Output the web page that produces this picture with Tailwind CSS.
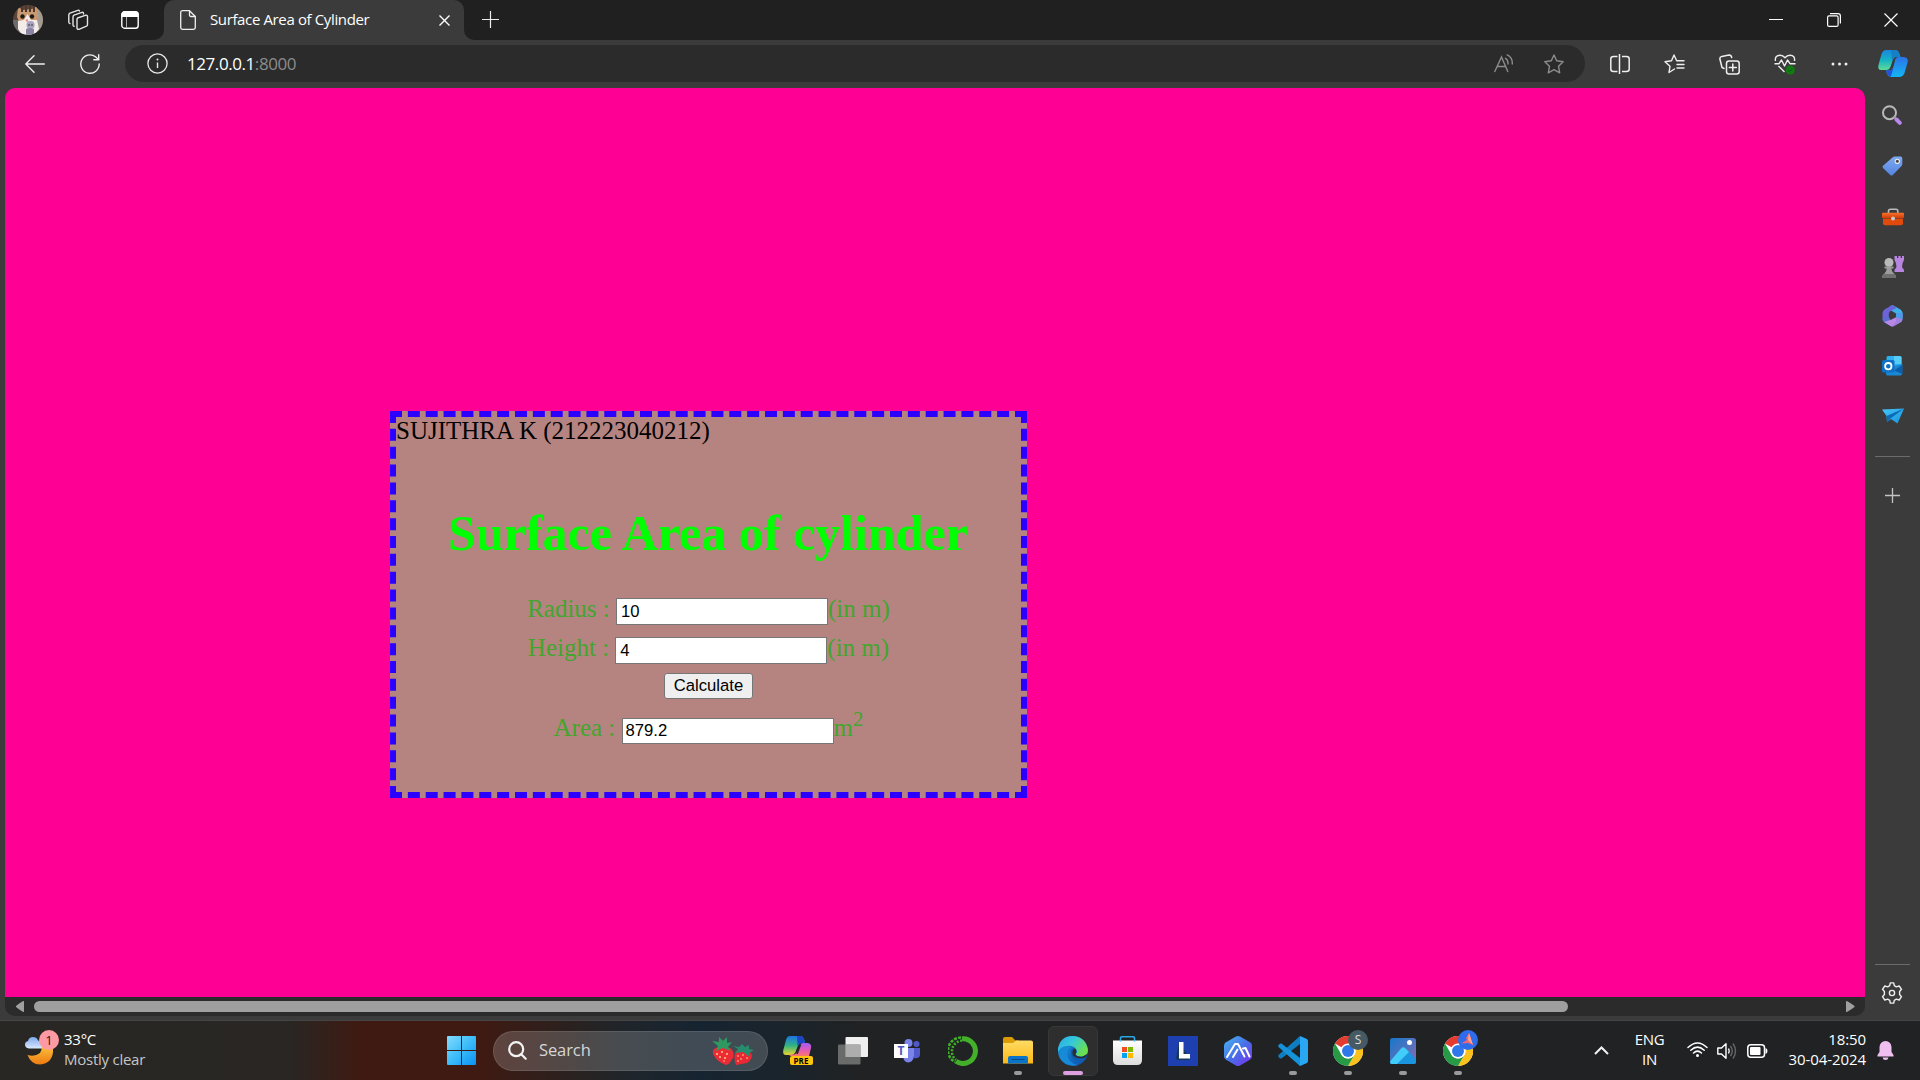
<!DOCTYPE html>
<html lang="en">
<head>
<meta charset="utf-8">
<title>Surface Area of Cylinder</title>
<script src="https://cdn.jsdelivr.net/npm/@tailwindcss/browser@4"></script>
</head>
<body class="w-[1920px] h-[1080px] overflow-hidden flex flex-col bg-[#3b3b3b] font-['Open_Sans','Noto_Sans',sans-serif] text-white">
<svg width="0" height="0" class="absolute">
  <defs>
    <linearGradient id="win" x1="0" y1="0" x2="1" y2="1"><stop offset="0" stop-color="#84dcff"/><stop offset=".5" stop-color="#3cbcf8"/><stop offset="1" stop-color="#0a92f5"/></linearGradient>
    <linearGradient id="cpA" x1="0" y1="0" x2="0" y2="1"><stop offset="0" stop-color="#1b86e0"/><stop offset=".5" stop-color="#16b2c4"/><stop offset="1" stop-color="#5fdc98"/></linearGradient>
    <linearGradient id="cpB" x1="0" y1="0" x2="0" y2="1"><stop offset="0" stop-color="#2b73e8"/><stop offset="1" stop-color="#14b6f4"/></linearGradient>
    <linearGradient id="cpC" x1="0" y1="0" x2="0" y2="1"><stop offset="0" stop-color="#1d74e4"/><stop offset=".5" stop-color="#30b384"/><stop offset="1" stop-color="#e8d52c"/></linearGradient>
    <linearGradient id="cpD" x1="0" y1="0" x2="0" y2="1"><stop offset="0" stop-color="#a45cf4"/><stop offset=".6" stop-color="#e95bb0"/><stop offset="1" stop-color="#f87a6a"/></linearGradient>
    <linearGradient id="edgeTop" x1="0" y1="0" x2="1" y2=".5"><stop offset="0" stop-color="#29a9e8"/><stop offset=".5" stop-color="#35c8d8"/><stop offset="1" stop-color="#6be04f"/></linearGradient>
    <linearGradient id="edgeLow" x1="0" y1="0" x2="1" y2="1"><stop offset="0" stop-color="#1a9be8"/><stop offset="1" stop-color="#0c4ea5"/></linearGradient>
    <linearGradient id="folder" x1="0" y1="0" x2="0" y2="1"><stop offset="0" stop-color="#ffdc66"/><stop offset="1" stop-color="#fcb813"/></linearGradient>
    <linearGradient id="hex" x1="0" y1="0" x2="1" y2="1"><stop offset="0" stop-color="#48b8f0"/><stop offset=".5" stop-color="#4870e8"/><stop offset="1" stop-color="#7a2cec"/></linearGradient>
    <linearGradient id="photo" x1="0" y1="0" x2="1" y2="1"><stop offset="0" stop-color="#1578cc"/><stop offset="1" stop-color="#8a6cb0"/></linearGradient>
    <linearGradient id="moon" x1="0" y1="0" x2="0" y2="1"><stop offset="0" stop-color="#fbc23c"/><stop offset="1" stop-color="#ee7a12"/></linearGradient>
    <linearGradient id="cloud" x1="0" y1="0" x2="0" y2="1"><stop offset="0" stop-color="#7ba8ee"/><stop offset="1" stop-color="#dbe8fb"/></linearGradient>
    <linearGradient id="bag" x1="0" y1="0" x2="0" y2="1"><stop offset="0" stop-color="#ffffff"/><stop offset="1" stop-color="#dcdcdc"/></linearGradient>
    <linearGradient id="plane" x1="0" y1="0" x2="1" y2="1"><stop offset="0" stop-color="#45c6fa"/><stop offset="1" stop-color="#1592dd"/></linearGradient>
    <linearGradient id="tag" x1="0" y1="0" x2="0" y2="1"><stop offset="0" stop-color="#7faaf0"/><stop offset="1" stop-color="#5484e0"/></linearGradient>
    <linearGradient id="tool" x1="0" y1="0" x2="0" y2="1"><stop offset="0" stop-color="#f8732c"/><stop offset="1" stop-color="#cf3d07"/></linearGradient>
    <clipPath id="avatarClip"><circle cx="15" cy="15" r="15"/></clipPath>
    <symbol id="chrome" viewBox="0 0 30 30">
      <circle cx="15" cy="15" r="15" fill="#fff"/>
      <path d="M15 15 2 7.5A15 15 0 0 1 28 7.5L15 7.5Z" fill="#e33b2e"/>
      <path d="M28 7.5A15 15 0 0 1 15 30L21.5 18.75A7.5 7.5 0 0 0 15 7.5Z" fill="#fcc21b"/>
      <path d="M15 30A15 15 0 0 1 2 7.5L8.5 18.75A7.5 7.5 0 0 0 21.5 18.75Z" fill="#269a45"/>
      <circle cx="15" cy="15" r="7.6" fill="#fff"/><circle cx="15" cy="15" r="6" fill="#2f78ea"/>
    </symbol>
  </defs>
</svg>

<!-- Tab strip -->
<header class="h-10 shrink-0 bg-[#202020] flex items-center">
  <div class="w-[56px] flex justify-center">
    <svg width="30" height="30" viewBox="0 0 30 30"><g clip-path="url(#avatarClip)">
      <rect width="30" height="30" fill="#5b4439"/><path d="M22 0h8v30h-8z" fill="#a39b90"/><path d="M0 15h8v15H0z" fill="#6e6a69"/>
      <path d="M5 2 10 5 19 4 24 1 25 12 22 19H7L4 12Z" fill="#c99a72"/><path d="M12 0h2v7h-2zM16 0h2v7h-2zM8 2h2v5H8zM20 2h2v5h-2z" fill="#4d382e"/>
      <path d="M14.500 9 18 15 24 15 26 24 21 30H9L5 24 5 16 11 15Z" fill="#f3ece8"/>
      <circle cx="9.500" cy="11.500" r="2.200" fill="#221a18"/><circle cx="19" cy="11.500" r="2.200" fill="#221a18"/><circle cx="14" cy="15.500" r="1.200" fill="#e88b86"/>
      <circle cx="17.500" cy="20" r="4" fill="#a7a2bd"/><path d="M13 24q4-2 8 0v6h-8z" fill="#8b84a4"/><circle cx="16" cy="20" r=".8" fill="#333"/><circle cx="19" cy="20" r=".8" fill="#333"/></g></svg>
  </div>
  <div class="w-[43px] flex justify-center">
    <svg width="22" height="22" viewBox="0 0 22 22" fill="none" stroke="#e4e4e4" stroke-width="1.400" stroke-linejoin="round" stroke-linecap="round"><path d="M10.500 9 19 6.200Q20.500 6 20.500 7.500V15.500Q20.500 16.800 19.500 17.200L12 20.300Q10 20.600 10 19V10.500Q10 9.300 10.500 9Z"/><path d="M16.500 5V4.300Q16.300 3 15 3.400L7 6.200Q6 6.700 6 8V16Q6 17.200 7.200 17.200"/><path d="M12.500 2Q12 .900 10.800 1.300L3 4.200Q1.800 4.800 1.800 6V13Q1.800 14.400 3 14.600"/></svg>
  </div>
  <div class="w-[61px] flex justify-center">
    <svg width="18" height="18" viewBox="0 0 18 18"><rect x=".8" y=".8" width="16.400" height="16.400" rx="2.800" fill="none" stroke="#fff" stroke-width="1.400"/><path d="M.500 6V3Q.500.500 3 .500H15Q17.500.500 17.500 3V6Z" fill="#fff"/><path d="M5.500 6v11" stroke="#aaa" stroke-width="1"/></svg>
  </div>
  <div class="w-1"></div>
  <div class="relative w-[300px] h-10 bg-[#3b3b3b] rounded-t-[10px] flex items-center">
    <svg class="absolute -left-[10px] bottom-0" width="10" height="10"><path d="M10 0V10H0A10 10 0 0 0 10 0" fill="#3b3b3b"/></svg>
    <svg class="absolute -right-[10px] bottom-0" width="10" height="10"><path d="M0 0V10H10A10 10 0 0 1 0 0" fill="#3b3b3b"/></svg>
    <svg class="ml-4" width="16" height="20" viewBox="0 0 16 20" fill="none" stroke="#eee" stroke-width="1.300" stroke-linejoin="round"><path d="M9.500.700H2.500Q.700.700.700 2.500V17.500Q.700 19.300 2.500 19.300H13.500Q15.300 19.300 15.300 17.500V6.500Z"/><path d="M9.500.700V5Q9.500 6.500 11 6.500H15.300"/></svg>
    <span class="ml-[14px] mb-0.5 w-[216px] text-[15px] leading-5 tracking-[-0.370px] whitespace-nowrap">Surface Area of Cylinder</span>
    <svg class="ml-[13px] mt-px" width="11" height="11" viewBox="0 0 11 11"><path d="M.500.500 10.500 10.500M10.500.500.500 10.500" stroke="#fff" stroke-width="1.400"/></svg>
  </div>
  <div class="w-[53px] flex justify-center"><svg class="mb-px" width="17" height="17"><path d="M8.500 0V17M0 8.500H17" stroke="#eee" stroke-width="1.200"/></svg></div>
  <div class="ml-auto flex items-center">
    <div class="w-[58px] flex justify-center"><svg width="14" height="14"><path d="M0 6.500H14" stroke="#fff"/></svg></div>
    <div class="w-[57px] flex justify-center"><svg width="14" height="14" fill="none" stroke="#fff" stroke-width="1.200"><rect x=".600" y="2.900" width="10.500" height="10.500" rx="1.500"/><path d="M3 .600H11Q13.400.600 13.400 3V10.500"/></svg></div>
    <div class="w-[58px] flex justify-center"><svg width="14" height="14"><path d="M.500.500 13.500 13.500M13.500.500.500 13.500" stroke="#fff" stroke-width="1.200"/></svg></div>
  </div>
</header>

<!-- Toolbar -->
<nav class="h-12 shrink-0 flex items-center">
  <div class="w-[70px] flex justify-center"><svg class="mb-px" width="20" height="18" fill="none" stroke="#eee" stroke-width="1.400" stroke-linecap="round" stroke-linejoin="round"><path d="M19.300 9H.800M9 .700.800 9 9 17.300"/></svg></div>
  <div class="w-[40px] flex justify-center"><svg width="20" height="20" fill="none" stroke="#eee" stroke-width="1.400" stroke-linecap="round"><path d="M19.200 10A9.200 9.200 0 1 1 15.500 2.700L18.500 5.500M18.700.800V5.700H13.800"/></svg></div>
  <div class="ml-[15px] mb-px w-[1460px] h-[37px] rounded-full bg-[#2b2b2b] flex items-center">
    <svg class="ml-[22px]" width="21" height="21" fill="none"><circle cx="10.500" cy="10.500" r="9.600" stroke="#e8e8e8" stroke-width="1.300"/><path d="M10.500 9.500V15" stroke="#e8e8e8" stroke-width="1.400"/><circle cx="10.500" cy="6.500" r="1" fill="#e8e8e8"/></svg>
    <span class="ml-[19px] text-[17px] leading-5 tracking-[-0.430px]">127.0.0.1<span class="text-[#8c8c8c]">:8000</span></span>
    <svg class="ml-auto" width="20" height="19" fill="none" stroke="#8c8c8c" stroke-width="1.400" stroke-linecap="round"><path d="M.800 17.500 7.500 3 13.800 17.500M3.200 12.500H11.600M11.500 4.300Q14.200 6 14 10M13.200.900Q18.700 3.500 18.300 10"/></svg>
    <svg class="ml-[30px] mr-[21px]" width="20" height="20" viewBox="0 0 20 20" fill="none" stroke="#8c8c8c" stroke-width="1.400" stroke-linejoin="round"><path d="M10 1 12.700 6.800 19.200 7.700 14.500 12.200 15.700 18.800 10 15.700 4.300 18.800 5.500 12.200.800 7.700 7.300 6.800Z"/></svg>
  </div>
  <div class="ml-[7px] w-[55px] flex justify-center"><svg width="20" height="20" fill="none" stroke="#eee" stroke-width="1.500"><path d="M7.500 2.500H3.500Q.800 2.500.800 5V15Q.800 17.500 3.500 17.500H7.500M12 2.500H16.500Q19.200 2.500 19.200 5V15Q19.200 17.500 16.500 17.500H12M9.500 0V20"/></svg></div>
  <div class="w-[55px] flex justify-center"><svg width="21" height="20" fill="none" stroke="#eee" stroke-width="1.400" stroke-linejoin="round" stroke-linecap="round"><path d="M10.500 15 5 18.500 6 12.200 1 7.700 7.500 6.800 10 1 12.700 6.800H20M13 10.500H20M13 14H20"/></svg></div>
  <div class="w-[55px] flex justify-center"><svg width="21" height="21" fill="none" stroke="#eee" stroke-width="1.500" stroke-linecap="round"><rect x="7.500" y="7" width="12.700" height="13" rx="2.500"/><path d="M13.800 10V17M10.300 13.500H17.300M5 14.500 3 13.500.900 5Q.700 3 2.800 2.400L10 .900Q12.200.800 12.700 3.500"/></svg></div>
  <div class="w-[55px] flex justify-center"><svg width="22" height="21" fill="none" stroke="#eee" stroke-width="1.400" stroke-linejoin="round"><path d="M1.400 7Q.700 1.300 6 1.200 9 1.200 11 3.700 13 1.200 16 1.200 21.300 1.300 20.500 7M.500 9.700H5L7.500 6 10.500 12 13.500 6 16 9.700H21.500M4.500 12 10.500 18"/><circle cx="16.300" cy="16" r="4.600" fill="#107c10" stroke="none"/><path d="M14.300 16.200 15.700 17.500 18.300 14.700" stroke="#153" stroke-width="1"/></svg></div>
  <div class="w-[55px] flex justify-center"><svg width="17" height="4" fill="#eee"><circle cx="2" cy="2" r="1.500"/><circle cx="8.500" cy="2" r="1.500"/><circle cx="15" cy="2" r="1.500"/></svg></div>
  <div class="w-[51px] flex justify-center"><svg width="30" height="28" viewBox="0 0 30 28"><path d="M8 0H18Q20.500.500 21.500 4L22.500 7H18Q15.500 7 14.500 11L12.500 17Q11.500 20 8 20H3Q-.500 20 .500 15L3.500 4Q5 0 8 0Z" fill="url(#cpA)"/><path d="M13 0H18Q20.500.500 22.500 7H18Q15.500 7 14 11Z" fill="#1580c4"/><path d="M20.500 7H26Q30.500 7.500 29.700 12L26.500 23Q25 27 21 27H13Q9 26 8 20.500H12Q14.500 20 15.500 16L17 10Q18 7 20.500 7Z" fill="url(#cpB)"/><path d="M8 20.500H12Q14.500 20 15.500 17L13 26.500Q9 26 8 20.500Z" fill="#2353dc"/><path d="M15.500 10 17 9.500 15 17 13 19.500H10.500Q12 19 12.700 17Z" fill="#3b3b3b"/></svg></div>
</nav>

<div class="h-[932px] shrink-0 flex">
  <div class="pl-[5px] w-[1865px] flex flex-col">
    <!-- Page -->
    <main class="h-[909px] bg-[#ff0095] rounded-t-[10px] pt-[323px] pl-[385px]">
      <section class="w-[637px] h-[387px] border-[6px] border-dashed border-[#2b00ff] bg-[#b58380] font-['Liberation_Serif',serif] text-[25px] leading-7 text-[#42a62e]">
        <p class="text-black">SUJITHRA K (212223040212)</p>
        <h1 class="mt-[59px] pr-px text-center font-bold text-[50px] leading-[58px] text-[#00ff00]">Surface Area of cylinder</h1>
        <form class="mt-[33px] flex flex-col items-center">
          <div class="h-[39px] flex items-start"><label class="whitespace-pre">Radius : </label><input value="10" class="mt-[3px] w-[212px] h-[27px] bg-white border-[#767676] border-[1.250px] px-1 font-['Liberation_Sans',sans-serif] text-[16.670px] text-black leading-5"><span>(in m)</span></div>
          <div class="h-[39px] flex items-start"><label class="whitespace-pre">Height : </label><input value="4" class="mt-[3px] w-[212px] h-[27px] bg-white border-[#767676] border-[1.250px] px-1 font-['Liberation_Sans',sans-serif] text-[16.670px] text-black leading-5"><span>(in m)</span></div>
          <button type="button" class="w-[89px] h-[26px] rounded-[3px] bg-[#efefef] border-[1.250px] border-[#767676] font-['Liberation_Sans',sans-serif] text-[16.670px] leading-5 text-black">Calculate</button>
          <div class="mt-[15px] flex items-start"><label class="whitespace-pre">Area : </label><input value="879.2" class="mt-1 w-[212px] h-[26px] bg-white border-[#767676] border-[1.250px] px-[3px] font-['Liberation_Sans',sans-serif] text-[16.670px] text-black leading-5"><span>m<sup class="text-[20.800px]">2</sup></span></div>
        </form>
      </section>
    </main>
    <!-- Horizontal scrollbar -->
    <div class="h-[19px] bg-[#2b2b2b] rounded-b-[10px] flex items-center px-[9px]">
      <svg class="ml-px" width="10" height="13"><path d="M9 1V12Q8 12.500 1 7V6Q8 .500 9 1Z" fill="#a0a0a0"/></svg>
      <div class="ml-[9px] w-[1534px] h-[11px] rounded-full bg-[#9f9f9f]"></div>
      <svg class="ml-auto mr-px" width="10" height="13"><path d="M1 1V12Q2 12.500 9.500 7V6Q2 .500 1 1Z" fill="#a0a0a0"/></svg>
    </div>
  </div>
  <!-- Sidebar -->
  <aside class="w-[55px] flex flex-col items-center pt-[2px]">
    <div class="h-[50px] flex items-center"><svg class="mr-px" width="20" height="20" fill="none"><circle cx="7.500" cy="7.700" r="6.500" stroke="#b9b9b9" stroke-width="2"/><path d="M12 12 14 14" stroke="#999" stroke-width="2"/><path d="M14.500 14.500 17.800 17.800" stroke="#b886ee" stroke-width="4" stroke-linecap="round"/></svg></div>
    <div class="h-[52px] flex items-center"><svg width="21" height="20"><path d="M10.500 1.500Q11.500.500 13 .400H18.500Q20.300.400 20.300 2.500V8Q20.300 9.300 19.300 10.300L10.800 19Q9.500 20 8.200 19L1 12Q0 10.800 1 9.700Z" fill="url(#tag)"/><circle cx="15.300" cy="5.300" r="2.600" fill="#eee"/><circle cx="15.300" cy="5.300" r="1.500" fill="#444"/></svg></div>
    <div class="h-[50px] flex items-center"><svg width="22" height="18"><path d="M6.500 5V3Q6.500 1.200 8.500 1.200H14Q15.800 1.200 15.800 3V5" fill="none" stroke="#bbb" stroke-width="1.600"/><path d="M1 4.700H21Q22 4.700 22 6V10H0V6Q0 4.700 1 4.700Z" fill="url(#tool)"/><path d="M1 10.400H21V15.500Q21 17.200 19 17.200H3Q1 17.200 1 15.500Z" fill="#e04b0d"/><circle cx="11" cy="10.500" r="2" fill="#c9c9c9"/></svg></div>
    <div class="h-[49px] flex items-center"><svg class="mb-px" width="22" height="23"><path d="M12.500 1H15V3H16.300V1H18.700V3H20V1H22V5Q20 8 20 12L22 15V17H12.500V15L14.500 12Q14.500 8 12.500 5Z" fill="#b784e0"/><circle cx="7" cy="7.500" r="4.500" fill="#b9b9b9"/><path d="M2.500 11.500H11.500V13.500H9.500Q9 16 13 19.500Q14 20.500 14 23H0Q0 20.500 1.500 19.500 5 16 4.500 13.500H2.500Z" fill="#9c9c9c"/><path d="M1.500 19H12.500Q14 20 14 23H0Q0 20 1.500 19Z" fill="#6f6f6f"/></svg></div>
    <div class="h-[50px] flex items-center"><svg width="21" height="22"><path d="M7.500 1.500 10.500 0 18.500 4.500Q20.500 6 20.500 8V12L14 8.500 9 5.500Z" fill="#3fb0ea"/><path d="M10.500 0 2.500 4.500Q.500 6 .500 8V15L6.800 12V8.500Q7 7 8.500 6L14.500 3Z" fill="#6c63da"/><path d="M.500 14 6.500 11.500 9 15.500 15 13.500 9.500 21.500 2.500 17.500Q.500 16 .500 14Z" fill="#5a6ed0"/><path d="M2 17 9 14.800 14.500 12V17L10.500 21.500Q9.500 21.500 8.500 21Z" fill="#b987e4"/><path d="M20.500 8.500V14.500Q20.500 16.500 18.500 17.500L10.500 22V20.500L14 17V8.500Z" fill="#a17fe0"/><path d="M20.500 7.500V14.500L14 12V8.500Z" fill="#4a9be8"/></svg></div>
    <div class="h-[50px] flex items-center"><svg width="21" height="20"><rect x="4.500" y="0" width="15" height="13" rx="1.500" fill="#2db0ee"/><path d="M12 0H18Q19.500 0 19.500 1.500V8H12Z" fill="#55cdf8"/><path d="M4 10H12L20.300 8V17Q20.300 19.500 18 19.500H6Q4 19.500 4 18Z" fill="#1888d6"/><path d="M12 14.500 20.300 9V18Z" fill="#0c5ea8"/><rect x="0" y="4" width="12.500" height="12.500" rx="1.500" fill="#0f70c8"/><circle cx="6.300" cy="10.200" r="3.200" fill="none" stroke="#fff" stroke-width="1.800"/></svg></div>
    <div class="h-[50px] flex items-center"><svg width="22" height="16"><path d="M0 1.500 22 .500 15.500 15.500 9 11 5 14 4.500 8Z" fill="url(#plane)"/><path d="M4.500 8 22 .500 8.500 10.500 5 14.500Z" fill="#0f6ab5"/></svg></div>
    <div class="mt-[15px] h-px w-[35px] bg-[#6b6b6b]"></div>
    <svg class="mt-[31px] mr-px" width="15" height="15"><path d="M7.500 0V15M0 7.500H15" stroke="#c4c4c4" stroke-width="1.300"/></svg>
    <div class="mt-auto h-px w-[35px] bg-[#6b6b6b]"></div>
    <svg class="mt-[17px] mb-4 mr-px" width="22" height="22" viewBox="0 0 22 22" fill="none" stroke="#eee" stroke-width="1.400" stroke-linejoin="round"><path d="M9.300.900H12.700L13.300 3.700 15.300 4.800 18.200 4 20.500 7.300 18.600 9.500V12.500L20.500 14.700 18.200 18 15.300 17.200 13.300 18.300 12.700 21.100H9.300L8.700 18.300 6.700 17.200 3.800 18 1.500 14.700 3.400 12.500V9.500L1.500 7.300 3.800 4 6.700 4.800 8.700 3.700Z"/><circle cx="11" cy="11" r="2.600"/></svg>
  </aside>
</div>

<!-- Taskbar -->
<footer class="h-[60px] shrink-0 border-t border-[#454545] flex items-center bg-[linear-gradient(90deg,#282724_0px,#292623_290px,#3f1a12_360px,#3f1a12_480px,#2a211f_570px,#20252a_620px,#162431_700px,#1b242b_790px,#202223_860px,#202223_1920px)]">
  <div class="w-[434px] flex items-center">
    <div class="relative ml-[25px] mb-[5px] w-[34px] h-[36px]">
      <svg width="34" height="36"><path d="M28 18Q29 33 15 34.500 6 34.500 2.500 25 10 27 15 23 17 20 17 16Z" fill="url(#moon)"/><path d="M4 18.500Q0 18 0 14.500 0 11.500 3 11 4 7 8 7 12 7 13 10.500L17 12V18.500Z" fill="url(#cloud)"/></svg>
      <span class="absolute left-[14px] top-0 w-5 h-5 rounded-full bg-[#ff99a4] text-[#221a1b] text-[13px] leading-5 text-center">1</span>
    </div>
    <div class="ml-[5px] mb-1 text-[15px] leading-5 tracking-[-0.250px]"><div>33°C</div><div class="text-[#c6c6c6]">Mostly clear</div></div>
  </div>
  <div class="w-[55px] flex justify-center"><svg width="29" height="29" fill="url(#win)"><path d="M0 1Q0 0 1 0H14V14H0ZM15 0H28Q29 0 29 1V14H15ZM0 15H14V29H1Q0 29 0 28ZM15 15H29V28Q29 29 28 29H15Z"/></svg></div>
  <div class="ml-1 w-[275px] h-10 rounded-full bg-white/18 border border-white/10 flex items-center pl-[14px] pr-[13px]">
    <svg width="19" height="19" fill="none" stroke="#f4f4f4" stroke-width="2.200" stroke-linecap="round"><circle cx="8.200" cy="8.200" r="7"/><path d="M13.300 13.300 17.700 17.700"/></svg>
    <span class="ml-3 mb-px text-[16.500px] leading-5 tracking-[-0.100px] text-[#d6d6d6]">Search</span>
    <svg class="ml-auto" width="42" height="30" viewBox="0 0 42 30"><path d="M2 13Q9 8 19 12.500 24 18 20 23.500 17 28.500 14 29 5 26 1 18 0 15 2 13Z" fill="#ed2b36"/><path d="M24 15Q31 12 39 17 42 22 35 27L24 29Q21 22 24 15Z" fill="#e72935"/><path d="M0 5 7 6 7 1 11 5 15 1 15 7 20 6 16 11 19 15 11 12 4 15 6 10Z" fill="#2e9a61"/><path d="M21 10 27 11 30 8 33 11 37 9 37 13 42 14 37 17 38 21 31 16 23 17 26 13Z" fill="#278b6d"/><g fill="#ffe08c"><circle cx="5" cy="18" r=".900"/><circle cx="10" cy="16" r=".900"/><circle cx="15" cy="18" r=".900"/><circle cx="8" cy="21" r=".900"/><circle cx="13" cy="22" r=".900"/><circle cx="12" cy="25" r=".700"/><circle cx="26" cy="20" r=".800"/><circle cx="31" cy="19" r=".800"/><circle cx="35" cy="22" r=".800"/><circle cx="29" cy="23" r=".800"/><circle cx="26" cy="25" r=".800"/></g></svg>
  </div>
  <div class="ml-[2px] flex items-center">
    <div class="w-[55px] flex justify-center"><div class="relative w-[30px] h-[29px]"><svg width="30" height="29"><path d="M7 0H18Q21 .500 22 7H18Q16 7 14 12L12.500 16Q11 19 8 19H3Q-.500 19 .300 14L3 4Q4 0 7 0Z" fill="url(#cpC)"/><path d="M14 0H18Q21 1 22 7H18Q16 7 14.500 10Z" fill="#1c45c8"/><path d="M20 7H25Q29 8 28 12L26 20H8Q6 19.500 6 18.500H11Q13.500 18 15 14L17 9Q18 7 20 7Z" fill="url(#cpD)"/><path d="M17.500 8.500 14 18" stroke="#222" stroke-width="1.500"/></svg><span class="absolute left-[7px] bottom-0 w-[23px] h-[9px] rounded-[2px] bg-[#fec40e] text-black font-bold text-[8px] leading-[9px] text-center">PRE</span></div></div>
    <div class="w-[55px] flex justify-center"><svg width="30" height="28"><rect x="7.500" y="0" width="22.500" height="20" rx="1" fill="#efefef"/><rect x="0" y="7.500" width="22.500" height="20" rx="1" fill="#777" fill-opacity=".85"/><path d="M7.500 7.500H22.500V20H7.500Z" fill="#adadad"/></svg></div>
    <div class="w-[55px] flex justify-center"><div class="relative w-[27px] h-[24px]"><svg width="27" height="24"><circle cx="14.500" cy="4" r="4" fill="#7b83eb"/><circle cx="22.500" cy="5" r="3" fill="#5059c9"/><path d="M18 9H26V16Q25 20 20 19Z" fill="#5059c9"/><path d="M9 9H20V17Q19 23.500 14 23.500 10 23 9 18Z" fill="#7b83eb"/></svg><span class="absolute left-0 top-[5px] w-[14px] h-[14px] bg-white text-[#5058c0] font-bold text-[12px] leading-[14px] text-center">T</span></div></div>
    <div class="w-[55px] flex justify-center"><svg width="30" height="30" fill="none" stroke="#43b02a"><path d="M14 2.700A12.400 12.400 0 1 1 8 25.300" stroke-width="5"/><path d="M13 1.500A13 13 0 0 0 7 26" stroke-width="2.500" stroke-dasharray="3 1.200"/><path d="M14 4.500A11 11 0 0 0 8 24" stroke-width="2.500" stroke-dasharray="2 1.500"/></svg></div>
    <div class="relative w-[55px] flex justify-center"><svg width="30" height="27"><path d="M0 2Q0 0 2 0H9L12.500 3.500H16V8H0Z" fill="#dc9b05"/><path d="M0 6H10L13 3.500H28Q30 3.500 30 5.500V26.500H0Z" fill="url(#folder)"/><path d="M5 26.500V21Q5 19 7 19H23Q25 19 25 21V26.500Z" fill="#0c74c8"/><path d="M8.500 22.500H21.500" stroke="#064b8c" stroke-width="1"/></svg><span class="absolute -bottom-[11px] w-2 h-1 rounded-full bg-[#9a9a9a]"></span></div>
    <div class="relative w-[55px] h-[50px] flex justify-center items-center"><div class="w-[50px] h-[50px] rounded-md bg-[#2f2e2e] border border-[#393838] flex items-center justify-center"><svg width="30" height="30"><circle cx="15" cy="15" r="15" fill="url(#edgeLow)"/><path d="M0 13Q2 0 15 0 28 1 30 14 30 20 23 20.500 17 20 18 17.500 20 16 18 13 15 9 9 10 3 10 0 16Z" fill="url(#edgeTop)"/><path d="M10 14Q7 26 20 29.200 7 31 2 22 .500 17 4 13 8 9 13 11 10 12 10 14Z" fill="#188bd8"/><path d="M13 14Q15 11 18 13.500 19 16 17.500 18 18 21 24 21L28.500 19Q25 27 19 25.500 12 23 13 14Z" fill="#0d5eb4"/><path d="M16.500 12.500Q19 14 18 17L17 18.500Q19 21 24 21L30 17.500 27.500 21.500Q20 24 15.300 20 13 15 16.500 12.500Z" fill="#2f2e2e"/></svg></div><span class="absolute bottom-px w-5 h-1 rounded-full bg-[#dc9fdf]"></span></div>
    <div class="w-[55px] flex justify-center"><svg width="29" height="29"><path d="M7.500 5V2Q7.500.800 9 .800H20Q21.500.800 21.500 2V5" fill="none" stroke="#29a8e8" stroke-width="1.600"/><path d="M0 4.500H29V24Q29 29 24 29H5Q0 29 0 24Z" fill="url(#bag)"/><path d="M7.500 4.500v1M21.500 4.500v1" stroke="#29a8e8" stroke-width="1.600"/><path d="M9 11h5v5H9z" fill="#f25022"/><path d="M15 11h5v5h-5z" fill="#7fba00"/><path d="M9 17h5v5H9z" fill="#00a4ef"/><path d="M15 17h5v5h-5z" fill="#ffb900"/></svg></div>
    <div class="w-[55px] flex justify-center"><div class="relative w-[30px] h-[30px] bg-[#1e3fb0]"><svg width="30" height="30"><path d="M11 6 8 22 9 24H21V21Z" fill="#143a58"/><path d="M11 6H15.500V18H22V22.500H11Z" fill="#fff"/></svg></div></div>
    <div class="w-[55px] flex justify-center"><svg width="28" height="30" fill="none"><path d="M12 .500Q14-.500 16 .500L26 6.300Q28 7.500 28 9.500V20.500Q28 22.500 26 23.700L16 29.500Q14 30.500 12 29.500L2 23.700Q0 22.500 0 20.500V9.500Q0 7.500 2 6.300Z" fill="url(#hex)"/><path d="M3 21 11 8 14 8 20.500 20.500M9 21 13.500 13.500M19 12.500 21.500 12 25.500 20.500" stroke="#fff" stroke-width="2" stroke-linecap="round" stroke-linejoin="round"/></svg></div>
    <div class="relative w-[55px] flex justify-center"><svg width="30" height="30"><path d="M22 0V8L3.500 22.500Q2 23 .500 21 0 20 .500 19Z" fill="#0f7dc2"/><path d="M22 30V22L3.500 7.500Q2 7 .500 9 0 10 .500 11Z" fill="#1493da"/><path d="M22 0 29 3Q30 4 30 5V25Q30 26 29 27L22 30Q21 29 22 28Z" fill="#2aa7f3"/></svg><span class="absolute -bottom-[9px] w-2 h-1 rounded-full bg-[#9a9a9a]"></span></div>
    <div class="relative w-[55px] flex justify-center"><svg width="30" height="30"><use href="#chrome"/></svg><span class="absolute left-[28px] -top-[6px] w-5 h-5 rounded-full bg-[#455a64] text-[#dedede] text-[12px] leading-5 text-center">S</span><span class="absolute -bottom-[9px] w-2 h-1 rounded-full bg-[#9a9a9a]"></span></div>
    <div class="relative w-[55px] flex justify-center"><svg width="26" height="26"><rect width="26" height="26" rx="2.500" fill="url(#photo)"/><path d="M0 24 12 10Q13.500 8.500 15 10L26 21V23.500Q26 26 23.500 26H2Q0 26 0 24Z" fill="#1c95e0"/><path d="M0 23.500 11.500 10Q13.500 8.500 15.500 10.500L19 14 7 26H2Q0 26 0 23.500Z" fill="#42ccfa"/><circle cx="19.500" cy="4.500" r="2.500" fill="#fff"/></svg><span class="absolute -bottom-[11px] w-2 h-1 rounded-full bg-[#9a9a9a]"></span></div>
    <div class="relative w-[55px] flex justify-center"><svg width="30" height="30"><use href="#chrome"/></svg><svg class="absolute left-[28px] -top-[6px]" width="20" height="20"><circle cx="10" cy="10" r="10" fill="#2f6cec"/><path d="M11 3 8 8 9 10 3 13.500 10 13 15 15Z" fill="#f4666c"/><path d="M11 3 15 15 10 10Z" fill="#ffa48e"/></svg><span class="absolute -bottom-[9px] w-2 h-1 rounded-full bg-[#9a9a9a]"></span></div>
  </div>
  <div class="ml-auto flex items-center pr-[26px]">
    <svg width="15" height="9" fill="none" stroke="#f2f2f2" stroke-width="2"><path d="M1 8 7.500 1.500 14 8"/></svg>
    <div class="ml-[25px] mb-[3px] w-[31px] text-[15px] leading-5 tracking-[-0.300px] text-center">ENG<br>IN</div>
    <svg class="ml-[22px] mb-px" width="21" height="16" fill="none" stroke="#fff" stroke-width="1.500" stroke-linecap="round"><path d="M1 5.500Q10.500-3.500 20 5.500M3.800 8.300Q10.500 2 17.200 8.300M6.500 11Q10.500 7.300 14.500 11"/><circle cx="10.500" cy="13.500" r="1.500" fill="#fff" stroke="none"/></svg>
    <svg class="ml-[9px]" width="20" height="18" fill="none" stroke="#fff" stroke-width="1.400" stroke-linejoin="round"><path d="M.800 6H4.500L9 1.800V16.200L4.500 12H.800Z"/><path d="M11.500 6.500Q13 9 11.500 11.500"/><path d="M13.500 4Q17 9 13.500 14M16 1.500Q21 9 16 16.500" stroke="#666"/></svg>
    <svg class="ml-[10px]" width="21" height="14"><rect x=".800" y=".800" width="16.700" height="12.400" rx="3" fill="none" stroke="#fff" stroke-width="1.500"/><rect x="3" y="3" width="10.500" height="8" rx="1" fill="#fff"/><path d="M18.500 4Q20.500 4.500 20.500 7 20.500 9.500 18.500 10Z" fill="#fff"/></svg>
    <div class="ml-5 mb-[3px] w-[78px] flex justify-end text-right text-[15px] leading-5 tracking-[-0.080px] whitespace-nowrap"><div>18:50<br>30-04-2024</div></div>
    <svg class="ml-[11px]" width="17" height="19" fill="#f0bff2"><path d="M8.500 0Q14 .500 14.500 6V11L16.500 14V15.500H.500V14L2.500 11V6Q3 .500 8.500 0ZM5.500 16.500H11.500Q11 19 8.500 19 6 19 5.500 16.500Z"/></svg>
  </div>
</footer>
</body>
</html>
